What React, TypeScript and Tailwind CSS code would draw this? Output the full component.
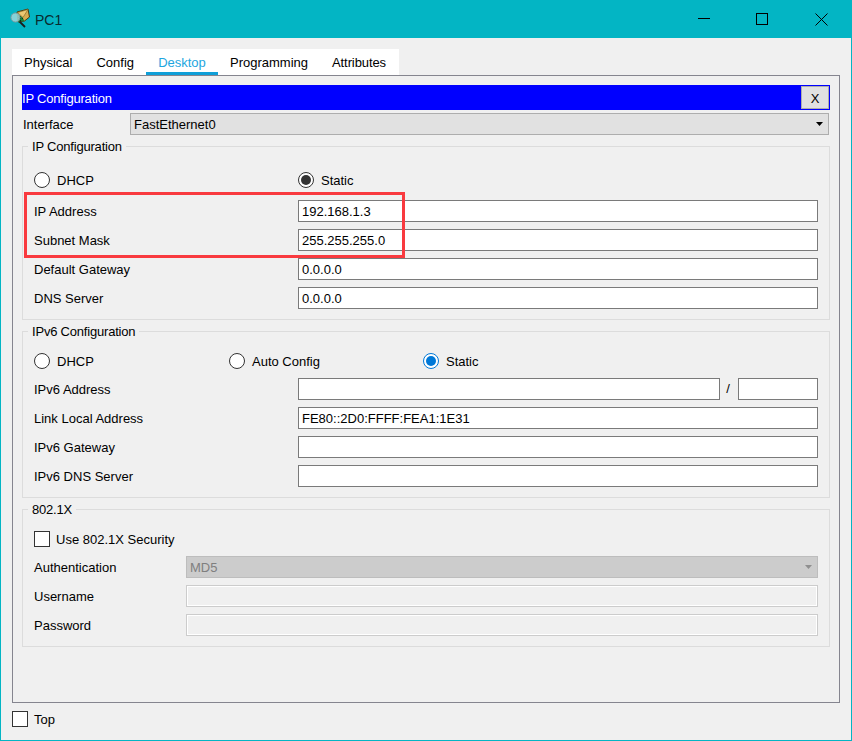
const font = "[font-family:'Liberation_Sans',Arial,sans-serif]";

function Radio({ state = 'off' }: { state?: 'off' | 'dark' | 'blue' }) {
  if (state === 'blue') {
    return (
      <span className="flex h-4 w-4 shrink-0 items-center justify-center rounded-full border border-[#0078d7] bg-white">
        <span className="h-2.5 w-2.5 rounded-full bg-[#0078d7]" />
      </span>
    );
  }
  return (
    <span className="flex h-4 w-4 shrink-0 items-center justify-center rounded-full border border-[#333333] bg-white">
      {state === 'dark' && <span className="h-2.5 w-2.5 rounded-full bg-[#333333]" />}
    </span>
  );
}

function RadioLabel({ label, state, className = '' }: { label: string; state?: 'off' | 'dark' | 'blue'; className?: string }) {
  return (
    <div className={`flex items-center gap-[7px] ${className}`}>
      <Radio state={state} />
      <span className="pt-[2px]">{label}</span>
    </div>
  );
}

function Check({ className = '' }: { className?: string }) {
  return <span className={`block h-4 w-4 shrink-0 border border-[#333333] bg-white ${className}`} />;
}

function Field({ value = '', className = '' }: { value?: string; className?: string }) {
  return (
    <div className={`flex h-[22px] items-center border border-[#7a7a7a] bg-white pl-[3px] leading-none ${className}`}>
      {value}
    </div>
  );
}

function Row({ label, value }: { label: string; value?: string }) {
  return (
    <div className="flex h-[22px] items-center">
      <span className="w-[264px] shrink-0 pt-[2px]">{label}</span>
      <Field value={value} className="flex-1" />
    </div>
  );
}

function DisabledField({ label }: { label: string }) {
  return (
    <div className="flex h-[22px] items-center">
      <span className="w-[152px] shrink-0 pt-[2px]">{label}</span>
      <div className="h-[22px] flex-1 border border-[#cccccc] bg-[#f0f0f0] shadow-[inset_0_0_0_1px_#ffffff]" />
    </div>
  );
}

function Group({ title, className = '', children }: { title: string; className?: string; children: React.ReactNode }) {
  return (
    <section className={`relative border border-[#dcdcdc] px-[11px] ${className}`}>
      <span className="absolute left-[5px] top-[-8px] bg-[#f0f0f0] px-1 leading-4 tracking-[-0.2px]">{title}</span>
      {children}
    </section>
  );
}

function Caret({ className = '' }: { className?: string }) {
  return (
    <svg width="7" height="4" viewBox="0 0 7 4" className={className}>
      <path d="M0 0h7L3.5 4z" fill="currentColor" />
    </svg>
  );
}

function PcIcon() {
  return (
    <svg width="22" height="22" viewBox="0 0 22 22" className="shrink-0">
      <path d="M7 4l11-3 1.500 8-5 4-6.500 1z" fill="#d6ac50" stroke="#4a3a12" />
      <path d="M7.500 4.500l5.500 5 5-8z" fill="#ecc873" stroke="#7a5f1e" strokeWidth="0.600" />
      <path d="M7 5.500l5.500 4 2 3.500-6.500 1z" fill="#17803a" />
      <path d="M8 7h1v1h-1zM10 8h1v1h-1zM8 9h1v1h-1zM10 10h1v1h-1zM12 10h1v1h-1zM8 11h1v1h-1zM10 12h1v1h-1z" fill="#0a3a14" />
      <circle cx="5.500" cy="9.500" r="4.500" fill="#a8dadd" fillOpacity="0.8" stroke="#7f9ea2" />
      <path d="M9.500 13.500l5.500 5.500" stroke="#1c1c1c" strokeWidth="1.800" />
    </svg>
  );
}

export default function App() {
  return (
    <div className={`relative flex h-[741px] w-[852px] flex-col border-x border-b border-[#03b5c4] bg-[#f0f0f0] text-[13px] text-black ${font}`}>
      <header className="-mx-px flex h-[38px] shrink-0 items-center bg-[#03b5c4] pl-[10px]">
        <PcIcon />
        <span className="ml-[3px] pt-[2px] text-[14px] text-[#0a2b2e]">PC1</span>
        <div className="ml-auto flex items-center">
          <svg width="12" height="2" viewBox="0 0 12 2" className="mr-[46px]"><rect width="12" height="1" fill="#000" /></svg>
          <svg width="12" height="12" viewBox="0 0 12 12" className="mr-[47px]"><rect x="0.5" y="0.5" width="11" height="11" fill="none" stroke="#000" /></svg>
          <svg width="13" height="13" viewBox="0 0 13 13" className="mr-[24px]"><path d="M0.500 0.500l12 12M12.500 0.500l-12 12" stroke="#000" /></svg>
        </div>
      </header>

      <div className="flex flex-1 flex-col px-[11px]">
        <nav className="mt-[11px] flex h-[26px] w-[387px] bg-white">
          <span className="px-3 pt-1">Physical</span>
          <span className="px-3 pt-1">Config</span>
          <span className="h-[26px] w-[72px] border-b-[3px] border-[#0f9fd8] pt-1 text-center text-[#1da6e0]">Desktop</span>
          <span className="px-3 pt-1">Programming</span>
          <span className="px-3 pt-1 tracking-[-0.1px]">Attributes</span>
        </nav>

        <main className="relative h-[628px] w-[828px] border border-[#85858f] px-[9px] pt-[9px]">
          <div className="flex h-[25px] items-center justify-between border-r border-[#0000ff] bg-[#0000ff] text-white">
            <span className="pt-[2px] tracking-[-0.2px]">IP Configuration</span>
            <span className="flex h-[23px] w-[28px] items-center justify-center border border-[#adadad] bg-[#e1e1e1] pt-[2px] text-black">X</span>
          </div>

          <div className="mt-[3px] flex h-[22px] items-center">
            <span className="ml-px w-[107px] shrink-0 pt-[2px]">Interface</span>
            <div className="flex h-[22px] flex-1 items-center justify-between border border-[#adadad] bg-[#e1e1e1] pl-[3px] pr-[5px]">
              <span className="pt-[2px]">FastEthernet0</span>
              <Caret className="text-black" />
            </div>
            <span className="w-px shrink-0" />
          </div>

          <Group title="IP Configuration" className="mt-[11px] h-[174px] pt-[23px]">
            <div className="flex h-5 items-center">
              <RadioLabel label="DHCP" className="w-[264px]" />
              <RadioLabel label="Static" state="dark" />
            </div>
            <div className="mt-[10px] flex flex-col gap-[7px]">
              <Row label="IP Address" value="192.168.1.3" />
              <Row label="Subnet Mask" value="255.255.255.0" />
              <Row label="Default Gateway" value="0.0.0.0" />
              <Row label="DNS Server" value="0.0.0.0" />
            </div>
          </Group>

          <Group title="IPv6 Configuration" className="mt-[11px] h-[167px] pt-[19px]">
            <div className="flex h-5 items-center">
              <RadioLabel label="DHCP" className="w-[195px]" />
              <RadioLabel label="Auto Config" className="w-[194px]" />
              <RadioLabel label="Static" state="blue" />
            </div>
            <div className="mt-[7px] flex flex-col gap-[7px]">
              <div className="flex h-[22px] items-center">
                <span className="w-[264px] shrink-0 pt-[2px]">IPv6 Address</span>
                <Field className="w-[422px]" />
                <span className="w-[18px] pr-[2px] text-center">/</span>
                <Field className="w-[80px]" />
              </div>
              <Row label="Link Local Address" value="FE80::2D0:FFFF:FEA1:1E31" />
              <Row label="IPv6 Gateway" />
              <Row label="IPv6 DNS Server" />
            </div>
          </Group>

          <Group title="802.1X" className="mt-[11px] h-[138px] pt-[19px]">
            <div className="flex h-5 items-center gap-1.5">
              <Check />
              <span className="pt-[2px]">Use 802.1X Security</span>
            </div>
            <div className="mt-[7px] flex flex-col gap-[7px]">
              <div className="flex h-[22px] items-center">
                <span className="w-[152px] shrink-0 pt-[2px]">Authentication</span>
                <div className="flex h-[22px] flex-1 items-center justify-between border border-[#bdbdbd] bg-[#cccccc] pl-[3px] pr-[5px] text-[#7f7f7f]">
                  <span className="pt-[2px]">MD5</span>
                  <Caret className="text-[#8f8f8f]" />
                </div>
              </div>
              <DisabledField label="Username" />
              <DisabledField label="Password" />
            </div>
          </Group>
        </main>

        <footer className="mt-2 flex h-4 items-center gap-1.5">
          <Check />
          <span className="pt-[2px]">Top</span>
        </footer>
      </div>
      <div className="pointer-events-none absolute left-[23px] top-[192px] h-[66px] w-[381px] border-[3px] border-[#f93a3f]" />
    </div>
  );
}
